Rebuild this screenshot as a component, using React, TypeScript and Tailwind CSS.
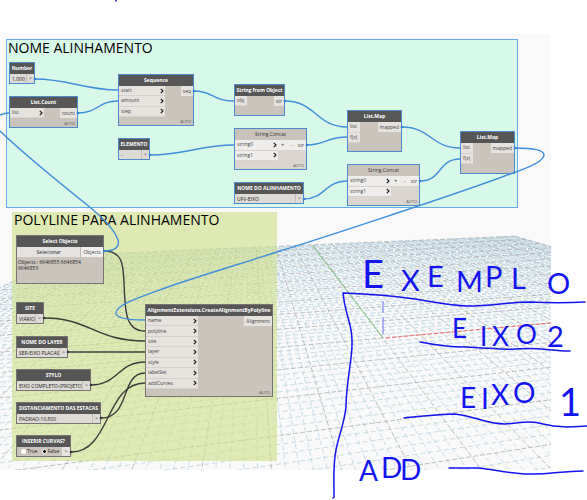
import React from "react";
import clsx from "clsx";

type Point = [number, number];

// Vanishing points of the floor grid
const ORIGIN: Point = [383, 338];
const VP_RED: Point = [2400, 156];
const VP_GREEN: Point = [250, 160];

function project(a: number, b: number) {
  const p = a * 0.0187;
  const q = b * 0.1;
  const w = 1 + p + q;
  const x = (ORIGIN[0] + p * VP_RED[0] + q * VP_GREEN[0]) / w;
  const y = (ORIGIN[1] + p * VP_RED[1] + q * VP_GREEN[1]) / w;
  return `${x.toFixed(1)} ${y.toFixed(1)}`;
}

// Five minor cells per major cell
function buildGrid() {
  let minor = "";
  let major = "";
  for (let i = -60; i <= 60; i++) {
    const d = `M${project(i / 5, 11)}L${project(i / 5, -6)}`;
    if (i % 5 === 0) major += d;
    else minor += d;
  }
  for (let j = -30; j <= 55; j++) {
    const d = `M${project(12, j / 5)}L${project(-12, j / 5)}`;
    if (j % 5 === 0) major += d;
    else minor += d;
  }
  return { minor, major };
}

const grid = buildGrid();

function Floor() {
  return (
    <svg className="absolute inset-0 h-full w-full" fill="none" aria-hidden="true">
      <path d={grid.minor} stroke="#bcd5e2" strokeWidth="0.8" strokeDasharray="5 3" />
      <path d={grid.major} stroke="#a0a9ad" strokeWidth="0.7" strokeDasharray="5 2" />
      <path d="M312 245L383 338" stroke="#7cc27c" />
      <path d="M386 338L551 323" stroke="#ff6b6b" strokeDasharray="4 2" />
      <path d="M383 301v12M383 317v17" stroke="#7272f5" />
    </svg>
  );
}

function Header({ title, light }: { title: string; light?: boolean }) {
  return (
    <h3
      className={clsx(
        "flex h-[11px] shrink-0 items-center justify-center whitespace-nowrap text-[5px]",
        light ? "bg-[#c9c3bc] text-[#333]" : "bg-[#565656] font-bold text-white"
      )}
    >
      {title}
    </h3>
  );
}

type NodeProps = {
  title: string;
  place: string;
  inputs: string[];
  inputBox: string;
  output: string;
  chevrons?: boolean;
  light?: boolean;
  dark?: boolean;
  steppers?: boolean;
  auto?: boolean;
};

function GraphNode({
  title,
  place,
  inputs,
  inputBox,
  output,
  chevrons,
  light,
  dark,
  steppers,
  auto,
}: NodeProps) {
  const portColor = light ? "bg-[#efedeb]" : "bg-[#e6e2de]";
  return (
    <article
      className={clsx(
        "absolute flex flex-col border",
        place,
        dark ? "border-[#77736f]" : "border-[#4a8cce]",
        light ? "bg-[#dad5cf]" : "bg-[#cac4bd]"
      )}
    >
      <Header title={title} light={light} />
      <div className="flex items-start justify-between">
        <ul className={clsx("flex flex-col", portColor, inputBox)}>
          {inputs.map((name) => (
            <li
              key={name}
              className="flex flex-1 items-center justify-between border-b border-[#d6d1cc] pl-[2px] pr-px text-[#444]"
            >
              {name}
              {chevrons && (
                <button aria-label={`Options for ${name}`}>
                  <svg width="4" height="6" viewBox="0 0 4 6" fill="none">
                    <path d="M0.8 0.8L3 3L0.8 5.2" stroke="#222" strokeWidth="1.2" />
                  </svg>
                </button>
              )}
            </li>
          ))}
        </ul>
        <div className={clsx("flex h-[10px] items-center text-[#444]", portColor)}>
          {steppers && (
            <>
              <button className="w-[10px] font-bold">+</button>
              <button className="w-2">-</button>
            </>
          )}
          <span className="px-[2px]">{output}</span>
        </div>
      </div>
      {auto && (
        <span className="mt-auto pb-px pr-[2px] text-right text-[4px] text-[#555]">AUTO</span>
      )}
    </article>
  );
}

type ValueProps = { title: string; place: string; value: string; dark?: boolean };

function ValueNode({ title, place, value, dark }: ValueProps) {
  return (
    <article
      className={clsx(
        "absolute flex h-[22px] flex-col border bg-[#dedad6]",
        place,
        dark ? "border-[#77736f]" : "border-[#4a8cce]"
      )}
    >
      <Header title={title} />
      <div className="flex flex-1 items-center">
        <input
          aria-label={title}
          defaultValue={value}
          className="h-full w-0 min-w-0 flex-1 bg-transparent pl-[2px] text-[#222] outline-none"
        />
        <span className="flex h-full w-2 items-center justify-center border-l border-[#c4bfba] text-[#333]">
          &gt;
        </span>
      </div>
    </article>
  );
}

function SelectObjects() {
  return (
    <article className="absolute left-[16px] top-[235px] h-[49px] w-[88px] border border-[#77736f] bg-[#cac4bd]">
      <Header title="Select Objects" />
      <div className="flex h-[10px] items-center text-[#444]">
        <button className="h-full flex-1 bg-[#e4e3e2] text-[#222]">Selecionar</button>
        <span className="flex h-full items-center border-l border-[#bbb] bg-[#f1efed] px-[2px]">
          Objects
        </span>
      </div>
      <p className="px-px pt-[2px] leading-[6px] text-[#222]">
        Objects : 6646855 6646854
        <br />
        6646853
      </p>
    </article>
  );
}

function CurvesNode() {
  return (
    <article className="absolute left-[16px] top-[435px] flex h-[22px] w-[55px] flex-col border border-[#77736f] bg-[#cac4bd]">
      <Header title="INSERIR CURVAS?" />
      <div className="flex flex-1 items-center text-[#222]">
        <label className="flex flex-1 items-center gap-px pl-[4px]">
          <input
            type="radio"
            name="curves"
            className="size-[5px] appearance-none rounded-full bg-white"
          />
          True
        </label>
        <label className="flex flex-1 items-center gap-px">
          <input
            type="radio"
            name="curves"
            defaultChecked
            className="size-[5px] appearance-none rounded-full border border-white bg-black"
          />
          False
        </label>
        <span className="flex h-full w-2 items-center justify-center bg-[#e6e2de] text-[#333]">
          &gt;
        </span>
      </div>
    </article>
  );
}

const blueWires = [
  "M35 79C68 79 85 90 118 90",
  "M0 115Q4 113 9 113",
  "M78 113C98 113 98 101 118 101",
  "M194 91C214 91 212 101 234 101",
  "M285 101C316 101 316 127 347 127",
  "M150 155C185 155 200 145 234 145",
  "M307 145C325 145 327 137 347 137",
  "M304 199C325 199 325 181 347 181",
  "M402 127C431 127 431 148 460 148",
  "M420 181C442 181 438 159 460 159",
  "M515 148C535 148 544 150 544 155C544 162 525 169 510 174C455 195 300 245 280 251C240 264 190 279 165 288C140 297 116 305 116 313C116 319 130 320 145 320",
  "M104 251C115 251 120 247 118 240C114 228 101 216 86 204C56 180 24 154 0 131",
];

const darkWires = [
  "M104 251C124 251 123 268 124 282C125 310 125 331 145 331",
  "M44 318C90 318 95 341 145 341",
  "M68 352H145",
  "M91 385C118 385 118 362 145 362",
  "M101 418C131 418 120 373 145 373",
  "M71 452C111 452 105 383 145 383",
];

const plugs: Point[] = [
  [35, 79], [78, 113], [194, 91], [285, 101], [150, 155], [307, 145],
  [304, 199], [402, 127], [420, 181], [515, 148], [104, 251],
];

const darkPlugs: Point[] = [[44, 318], [68, 352], [91, 385], [101, 418], [71, 452]];

function Wires() {
  return (
    <svg
      className="pointer-events-none absolute inset-0 h-full w-full"
      fill="none"
      aria-hidden="true"
    >
      <g stroke="#3c3c3c" strokeWidth="1.4">
        {darkWires.map((d) => (
          <path key={d} d={d} />
        ))}
      </g>
      <g stroke="#3f8fdc" strokeWidth="1.4">
        {blueWires.map((d) => (
          <path key={d} d={d} />
        ))}
      </g>
      {plugs.map(([x, y]) => (
        <circle key={`${x}-${y}`} cx={x} cy={y} r="1.3" fill="#2f80d0" />
      ))}
      {darkPlugs.map(([x, y]) => (
        <circle key={`${x}-${y}`} cx={x} cy={y} r="1.3" fill="#333" />
      ))}
    </svg>
  );
}

// Pen notes sketched over the canvas
function Notes() {
  return (
    <svg className="pointer-events-none absolute inset-0 h-full w-full" fill="none">
      <g stroke="#1414f0" strokeWidth="1.5" strokeLinecap="round" strokeLinejoin="round">
        <path d="M116 0v1" />
        <path d="M333 498L334 497C334 480 333 463 336 450C339 434 344 425 346 407C346 390 349 375 351 358C354 335 350 325 347 314Q344 303 343 293C370 294 395 296 415 299C435 302 448 306 468 306C490 306 510 302 530 302C550 303 565 303 585 302" />
        <path d="M420 342C440 346 450 347 465 347C490 348 500 350 515 349C540 347 550 351 570 351" />
        <path d="M404 418C425 416 440 414 455 414C475 416 485 424 505 424C520 423 530 420 543 424C560 428 570 427 587 426" />
        <path d="M449 468H477C495 469 503 473 525 474C550 475 560 471 583 471" />
      </g>
      <g fill="#1414f0" className="font-['Lato',sans-serif]">
        <text x="362 401 427 456 485 511 547" y="288 291 287 292 287 289 294" fontSize="29">
          <tspan fontSize="38">E</tspan>XEMPLO
        </text>
        <text x="452 480 492 516 538 547" y="338 346 346 344 344 347" fontSize="26">
          EIXO <tspan fontSize="29">2</tspan>
        </text>
        <text x="460 481 491 513 538 559" y="408 409 405 403 403 416" fontSize="28">
          EIXO <tspan fontSize="38">1</tspan>
        </text>
        <text x="359 381 400" y="481 478 480" fontSize="28">
          ADD
        </text>
      </g>
    </svg>
  );
}

export default function App() {
  return (
    <main className="relative min-h-screen w-full overflow-hidden bg-white font-['Open_Sans',sans-serif] text-[5px] leading-none">
      <div className="absolute left-0 top-0 h-[470px] w-[551px] overflow-hidden">
        <div className="mt-[34px] h-full bg-[#f9f9f9]" />
        <Floor />
      </div>

      <section className="absolute left-[6px] top-[39px] h-[169px] w-[512px] border border-[#67aae8] bg-[#d8f8ea]">
        <h2 className="px-px text-[14px] leading-4 text-black">NOME ALINHAMENTO</h2>
      </section>
      <section className="absolute left-[12px] top-[212px] h-[249px] w-[265px] bg-[#cfe18f]/65">
        <h2 className="px-[2px] text-[14px] leading-4 text-black">POLYLINE PARA ALINHAMENTO</h2>
      </section>

      <ValueNode title="Number" value="1.000" place="left-[9px] top-[62px] w-[26px]" />
      <GraphNode
        title="List.Count"
        place="left-[9px] top-[96px] h-[32px] w-[69px]"
        inputs={["list"]}
        inputBox="h-[10px] w-[34px]"
        output="count"
        chevrons
        auto
      />
      <GraphNode
        title="Sequence"
        place="left-[118px] top-[74px] h-[52px] w-[76px]"
        inputs={["start", "amount", "step"]}
        inputBox="h-[31px] w-[46px]"
        output="seq"
        chevrons
        auto
      />
      <GraphNode
        title="String from Object"
        place="left-[234px] top-[84px] h-[32px] w-[51px]"
        inputs={["obj"]}
        inputBox="h-[10px] w-[12px]"
        output="str"
      />
      <ValueNode title="ELEMENTO" value="-" place="left-[118px] top-[138px] w-[32px]" />
      <GraphNode
        title="String.Concat"
        place="left-[234px] top-[128px] h-[42px] w-[73px]"
        inputs={["string0", "string1"]}
        inputBox="h-[21px] w-[44px]"
        output="str"
        chevrons
        light
        steppers
        auto
      />
      <ValueNode
        title="NOME DO ALINHAMENTO"
        value="UFV-EIXO"
        place="left-[234px] top-[182px] w-[70px]"
      />
      <GraphNode
        title="List.Map"
        place="left-[347px] top-[110px] h-[42px] w-[55px]"
        inputs={["list", "f(x)"]}
        inputBox="h-[21px] w-[12px]"
        output="mapped"
      />
      <GraphNode
        title="String.Concat"
        place="left-[347px] top-[164px] h-[42px] w-[73px]"
        inputs={["string0", "string1"]}
        inputBox="h-[21px] w-[44px]"
        output="str"
        chevrons
        light
        steppers
        auto
      />
      <GraphNode
        title="List.Map"
        place="left-[460px] top-[131px] h-[43px] w-[55px]"
        inputs={["list", "f(x)"]}
        inputBox="h-[21px] w-[12px]"
        output="mapped"
      />

      <SelectObjects />
      <ValueNode title="SITE" value="VIÁRIO" place="left-[16px] top-[302px] w-[28px]" dark />
      <ValueNode
        title="NOME DO LAYER"
        value="SER-EIXO PLACAS"
        place="left-[16px] top-[336px] w-[52px]"
        dark
      />
      <ValueNode
        title="STYLO"
        value="EIXO COMPLETO-(PROJETO)"
        place="left-[16px] top-[369px] w-[75px]"
        dark
      />
      <ValueNode
        title="DISTANCIAMENTO DAS ESTACAS"
        value="PADRAO-10.800"
        place="left-[16px] top-[402px] w-[85px]"
        dark
      />
      <CurvesNode />
      <GraphNode
        title="AlignmentExtensions.CreateAlignmentByPolyline"
        place="left-[145px] top-[304px] h-[93px] w-[128px]"
        inputs={["name", "polyline", "site", "layer", "style", "labelSet", "addCurves"]}
        inputBox="h-[73px] w-[52px]"
        output="Alignment"
        chevrons
        dark
        auto
      />

      <Wires />
      <Notes />
    </main>
  );
}
